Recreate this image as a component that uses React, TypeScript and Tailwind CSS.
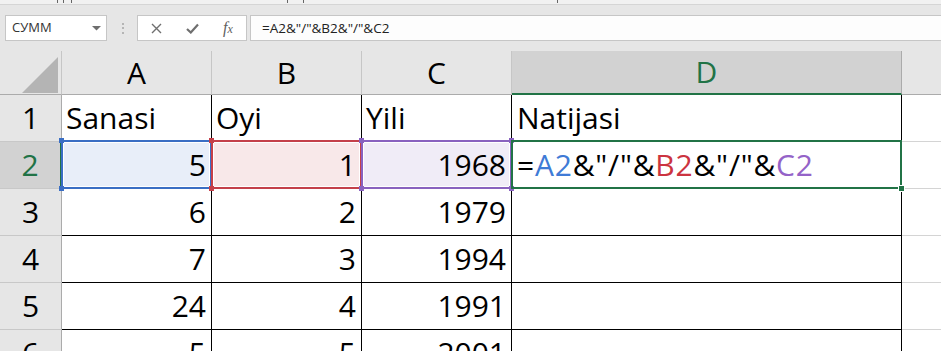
import React from 'react';

type Range = 'blue' | 'red' | 'purple';

const rangeStyle: Record<Range, { box: string; dot: string }> = {
  blue: { box: 'border-[#3a6ec4] bg-[#e8eef9]', dot: 'bg-[#3a6ec4]' },
  red: { box: 'border-[#c4404a] bg-[#f8e8e9]', dot: 'bg-[#c4404a]' },
  purple: { box: 'border-[#8962bf] bg-[#f0ecf7]', dot: 'bg-[#8962bf]' },
};

const rows: { cells: (string | number)[]; label: number }[] = [
  { label: 1, cells: ['Sanasi', 'Oyi', 'Yili'] },
  { label: 2, cells: [5, 1, 1968] },
  { label: 3, cells: [6, 2, 1979] },
  { label: 4, cells: [7, 3, 1994] },
  { label: 5, cells: [24, 4, 1991] },
  { label: 6, cells: [5, 5, 2001] },
];

const rangeFor: Range[] = ['blue', 'red', 'purple'];

function TopBar() {
  return (
    <div className="h-[51px] bg-[#e6e6e6]">
      {/* bottom of the ribbon above, text cut off */}
      <div className="h-[5px] bg-[#f1f1f1] border-b border-[#d5d5d5] flex items-start">
        <span className="ml-[57px] w-px h-[3px] bg-[#666]" />
        <span className="ml-[5px] w-px h-[3px] bg-[#666]" />
        <span className="ml-[7px] w-px h-[3px] bg-[#666]" />
        <span className="ml-[215px] w-px h-[3px] bg-[#666]" />
        <span className="ml-[15px] w-px h-[3px] bg-[#666]" />
        <span className="ml-[253px] w-px h-[3px] bg-[#666]" />
      </div>

      <div className="flex items-center h-[26px] mt-[10px]">
        <div className="ml-[5px] w-[102px] h-full border border-[#c6c6c6] bg-white flex items-center pl-[6px] pr-[5px]">
          <span className="text-[13px] text-[#333] flex-1">СУММ</span>
          <svg width="9" height="5" viewBox="0 0 9 5">
            <path d="M0 0 L9 0 L4.5 4.5 Z" fill="#6e6e6e" />
          </svg>
        </div>

        <div className="ml-[15px] flex flex-col gap-[2.5px]">
          <span className="w-[2px] h-[2px] bg-[#b5b5b5]" />
          <span className="w-[2px] h-[2px] bg-[#b5b5b5]" />
          <span className="w-[2px] h-[2px] bg-[#b5b5b5]" />
        </div>

        <div className="ml-[13px] w-[110px] h-full border border-[#c6c6c6] bg-white flex items-center">
          <div className="w-[36px] flex justify-center">
            <svg width="11" height="11" viewBox="0 0 11 11">
              <path d="M1 1 L10 10 M10 1 L1 10" stroke="#6f6f6f" strokeWidth="1.4" fill="none" />
            </svg>
          </div>
          <div className="w-[36px] flex justify-center">
            <svg width="13" height="11" viewBox="0 0 13 11">
              <path d="M1 6 L4.8 9.5 L12 1.5" stroke="#6f6f6f" strokeWidth="2.2" fill="none" />
            </svg>
          </div>
          <div className="w-[36px] flex justify-center">
            <span className="font-['Liberation_Serif',serif] italic text-[16px] text-[#5f5f5f] leading-none">
              f<span className="text-[12px]">x</span>
            </span>
          </div>
        </div>

        <div className="ml-[3px] flex-1 -mr-[4px] h-full border border-[#c6c6c6] bg-[#fdfdfd] flex items-center pl-[11px]">
          <span className="text-[13.5px] text-[#222]">=A2&amp;"/"&amp;B2&amp;"/"&amp;C2</span>
        </div>
      </div>
    </div>
  );
}

function Corners({ dot }: { dot: string }) {
  return (
    <>
      <span className={`absolute -left-[4px] -top-[4px] w-[5px] h-[5px] ${dot}`} />
      <span className={`absolute -right-[4px] -top-[4px] w-[5px] h-[5px] ${dot}`} />
      <span className={`absolute -left-[4px] -bottom-[4px] w-[5px] h-[5px] ${dot}`} />
      <span className={`absolute -right-[4px] -bottom-[4px] w-[5px] h-[5px] ${dot}`} />
    </>
  );
}

function Sheet() {
  return (
    <div className="grid grid-cols-[62px_150px_150px_150px_390px_1fr] text-[30px] text-black">
      {/* column headers */}
      <div className="h-[44px] border-r border-[#c6c6c6] border-b border-b-[#ababab] flex items-end justify-end pr-[3px] pb-[1px]">
        <svg width="36" height="36" viewBox="0 0 36 36">
          <path d="M0 36 L36 36 L36 0 Z" fill="#b4b4b4" />
        </svg>
      </div>
      {['A', 'B', 'C'].map((c) => (
        <div
          key={c}
          className="h-[44px] border-r border-[#c6c6c6] border-b border-b-[#ababab] text-center leading-[43px]"
        >
          {c}
        </div>
      ))}
      <div className="h-[44px] bg-[#d2d2d2] border-r border-[#ababab] border-b-2 border-b-[#217346] text-center leading-[42px] text-[#217346]">
        D
      </div>
      <div className="h-[44px] border-b border-[#ababab]" />

      {rows.map((row) => {
        const active = row.label === 2;
        return (
          <React.Fragment key={row.label}>
            <div
              className={
                active
                  ? 'h-[47px] bg-[#d2d2d2] border-r-2 border-[#217346] border-b border-b-[#c8c8c8] text-center leading-[46px] text-[#217346]'
                  : 'h-[47px] border-r border-[#ababab] border-b border-b-[#c8c8c8] text-center leading-[46px]'
              }
            >
              {row.label}
            </div>

            {row.cells.map((v, i) => {
              const isText = typeof v === 'string';
              const r = active ? rangeStyle[rangeFor[i]] : null;
              return (
                <div
                  key={i}
                  className={`relative h-[47px] bg-white border-r border-b border-black leading-[46px] whitespace-nowrap ${
                    isText ? 'text-left pl-[4px]' : 'text-right pr-[5px]'
                  }`}
                >
                  {r && (
                    <div
                      className={`absolute -top-[2px] -left-px -right-px -bottom-px border-2 shadow-[inset_0_0_0_1px_#fff] z-[1] ${r.box}`}
                    >
                      <Corners dot={r.dot} />
                    </div>
                  )}
                  <span className="relative z-[2]">{v}</span>
                </div>
              );
            })}

            <div className="relative h-[47px] bg-white border-r border-b border-black leading-[46px] pl-[5px] whitespace-nowrap">
              {row.label === 1 && 'Natijasi'}
              {active && (
                <>
                  <div className="absolute -top-[2px] -left-px -right-px -bottom-px border-2 border-[#217346] z-[1]">
                    <span className="absolute -right-[4px] -bottom-[4px] w-[5px] h-[5px] bg-[#217346] outline outline-1 outline-white" />
                  </div>
                  <span className="relative z-[2] tracking-[0.8px]">
                    =<span className="text-[#3f7bd6]">A2</span>&amp;"/"&amp;
                    <span className="text-[#cc3440]">B2</span>&amp;"/"&amp;
                    <span className="text-[#9463c8]">C2</span>
                  </span>
                </>
              )}
            </div>
            <div className="h-[47px] bg-white border-b border-[#d4d4d4]" />
          </React.Fragment>
        );
      })}
    </div>
  );
}

export default function App() {
  return (
    <div className="w-[941px] h-[351px] overflow-hidden bg-[#e6e6e6] font-['Open_Sans',sans-serif]">
      <TopBar />
      <Sheet />
    </div>
  );
}
